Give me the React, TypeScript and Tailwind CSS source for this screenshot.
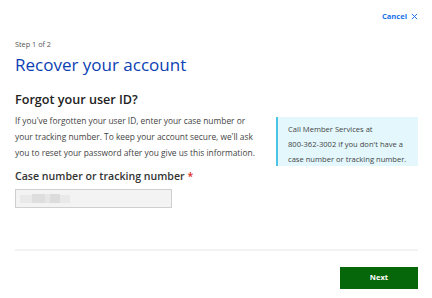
export default function App() {
  return (
    <div className="w-[432px] h-[298px] bg-white overflow-hidden" style={{ fontFamily: '"Open Sans", sans-serif' }}>
      <div className="pl-[15px] pr-[14px]">
        <div className="flex justify-end pt-[6px] h-[26px]">
          <button className="flex items-center gap-[3px] text-[7.6px] font-bold text-[#1a73e8] leading-[12px]">
            Cancel
            <svg width="7" height="7" viewBox="0 0 8 8" className="ml-[1px]">
              <path d="M1 1L7 7M7 1L1 7" stroke="#1a73e8" strokeWidth="1.1" />
            </svg>
          </button>
        </div>
        <div className="text-[7.3px] text-[#555] leading-[10px] mt-[13px]">Step 1 of 2</div>
        <h1 className="text-[17px] text-[#0b3fb3] leading-[22px] mt-[5px]">Recover your account</h1>
        <h2 className="text-[12.6px] font-semibold text-[#222] leading-[18px] mt-[15px]">Forgot your user ID?</h2>
        <div className="flex justify-between mt-[4px]">
          <p className="w-[250px] whitespace-nowrap text-[8.4px] text-[#444] leading-[16px]">
            If you've forgotten your user ID, enter your case number or
            <br />
            your tracking number. To keep your account secure, we'll ask
            <br />
            you to reset your password after you give us this information.
          </p>
          <div className="w-[142px] h-[49px] mt-[4px] bg-[#e3f7fd] border-l-2 border-[#4cc4e6] pl-[10px] pt-[5px] whitespace-nowrap text-[7.6px] leading-[15px] text-[#444]">
            Call Member Services at
            <br />
            800-362-3002 if you don't have a
            <br />
            case number or tracking number.
          </div>
        </div>
        <div className="text-[10.6px] font-semibold text-[#333] leading-[14px] mt-[3px]">
          Case number or tracking number <span className="text-[#e0322a]">*</span>
        </div>
        <div className="mt-[6px] w-[157px] h-[19px] bg-[#f3f3f3] border border-[#cfcfcf] flex items-center pl-[4px] gap-0">
          <div className="w-[12px] h-[8px] bg-[#e9e9e9]" />
          <div className="w-[13px] h-[9px] bg-[#dedede]" />
          <div className="w-[5px] h-[9px] bg-[#e6e6e6]" />
          <div className="w-[10px] h-[9px] bg-[#dcdcdc]" />
          <div className="w-[10px] h-[8px] bg-[#e9e9e9]" />
        </div>
        <div className="mt-[41px] h-[2px] bg-[#f2f2f2]" />
        <div className="flex justify-end mt-[16px]">
          <button className="w-[78px] h-[22px] bg-[#05660a] text-white text-[7.6px] font-bold flex items-center justify-center">
            Next
          </button>
        </div>
      </div>
    </div>
  );
}
